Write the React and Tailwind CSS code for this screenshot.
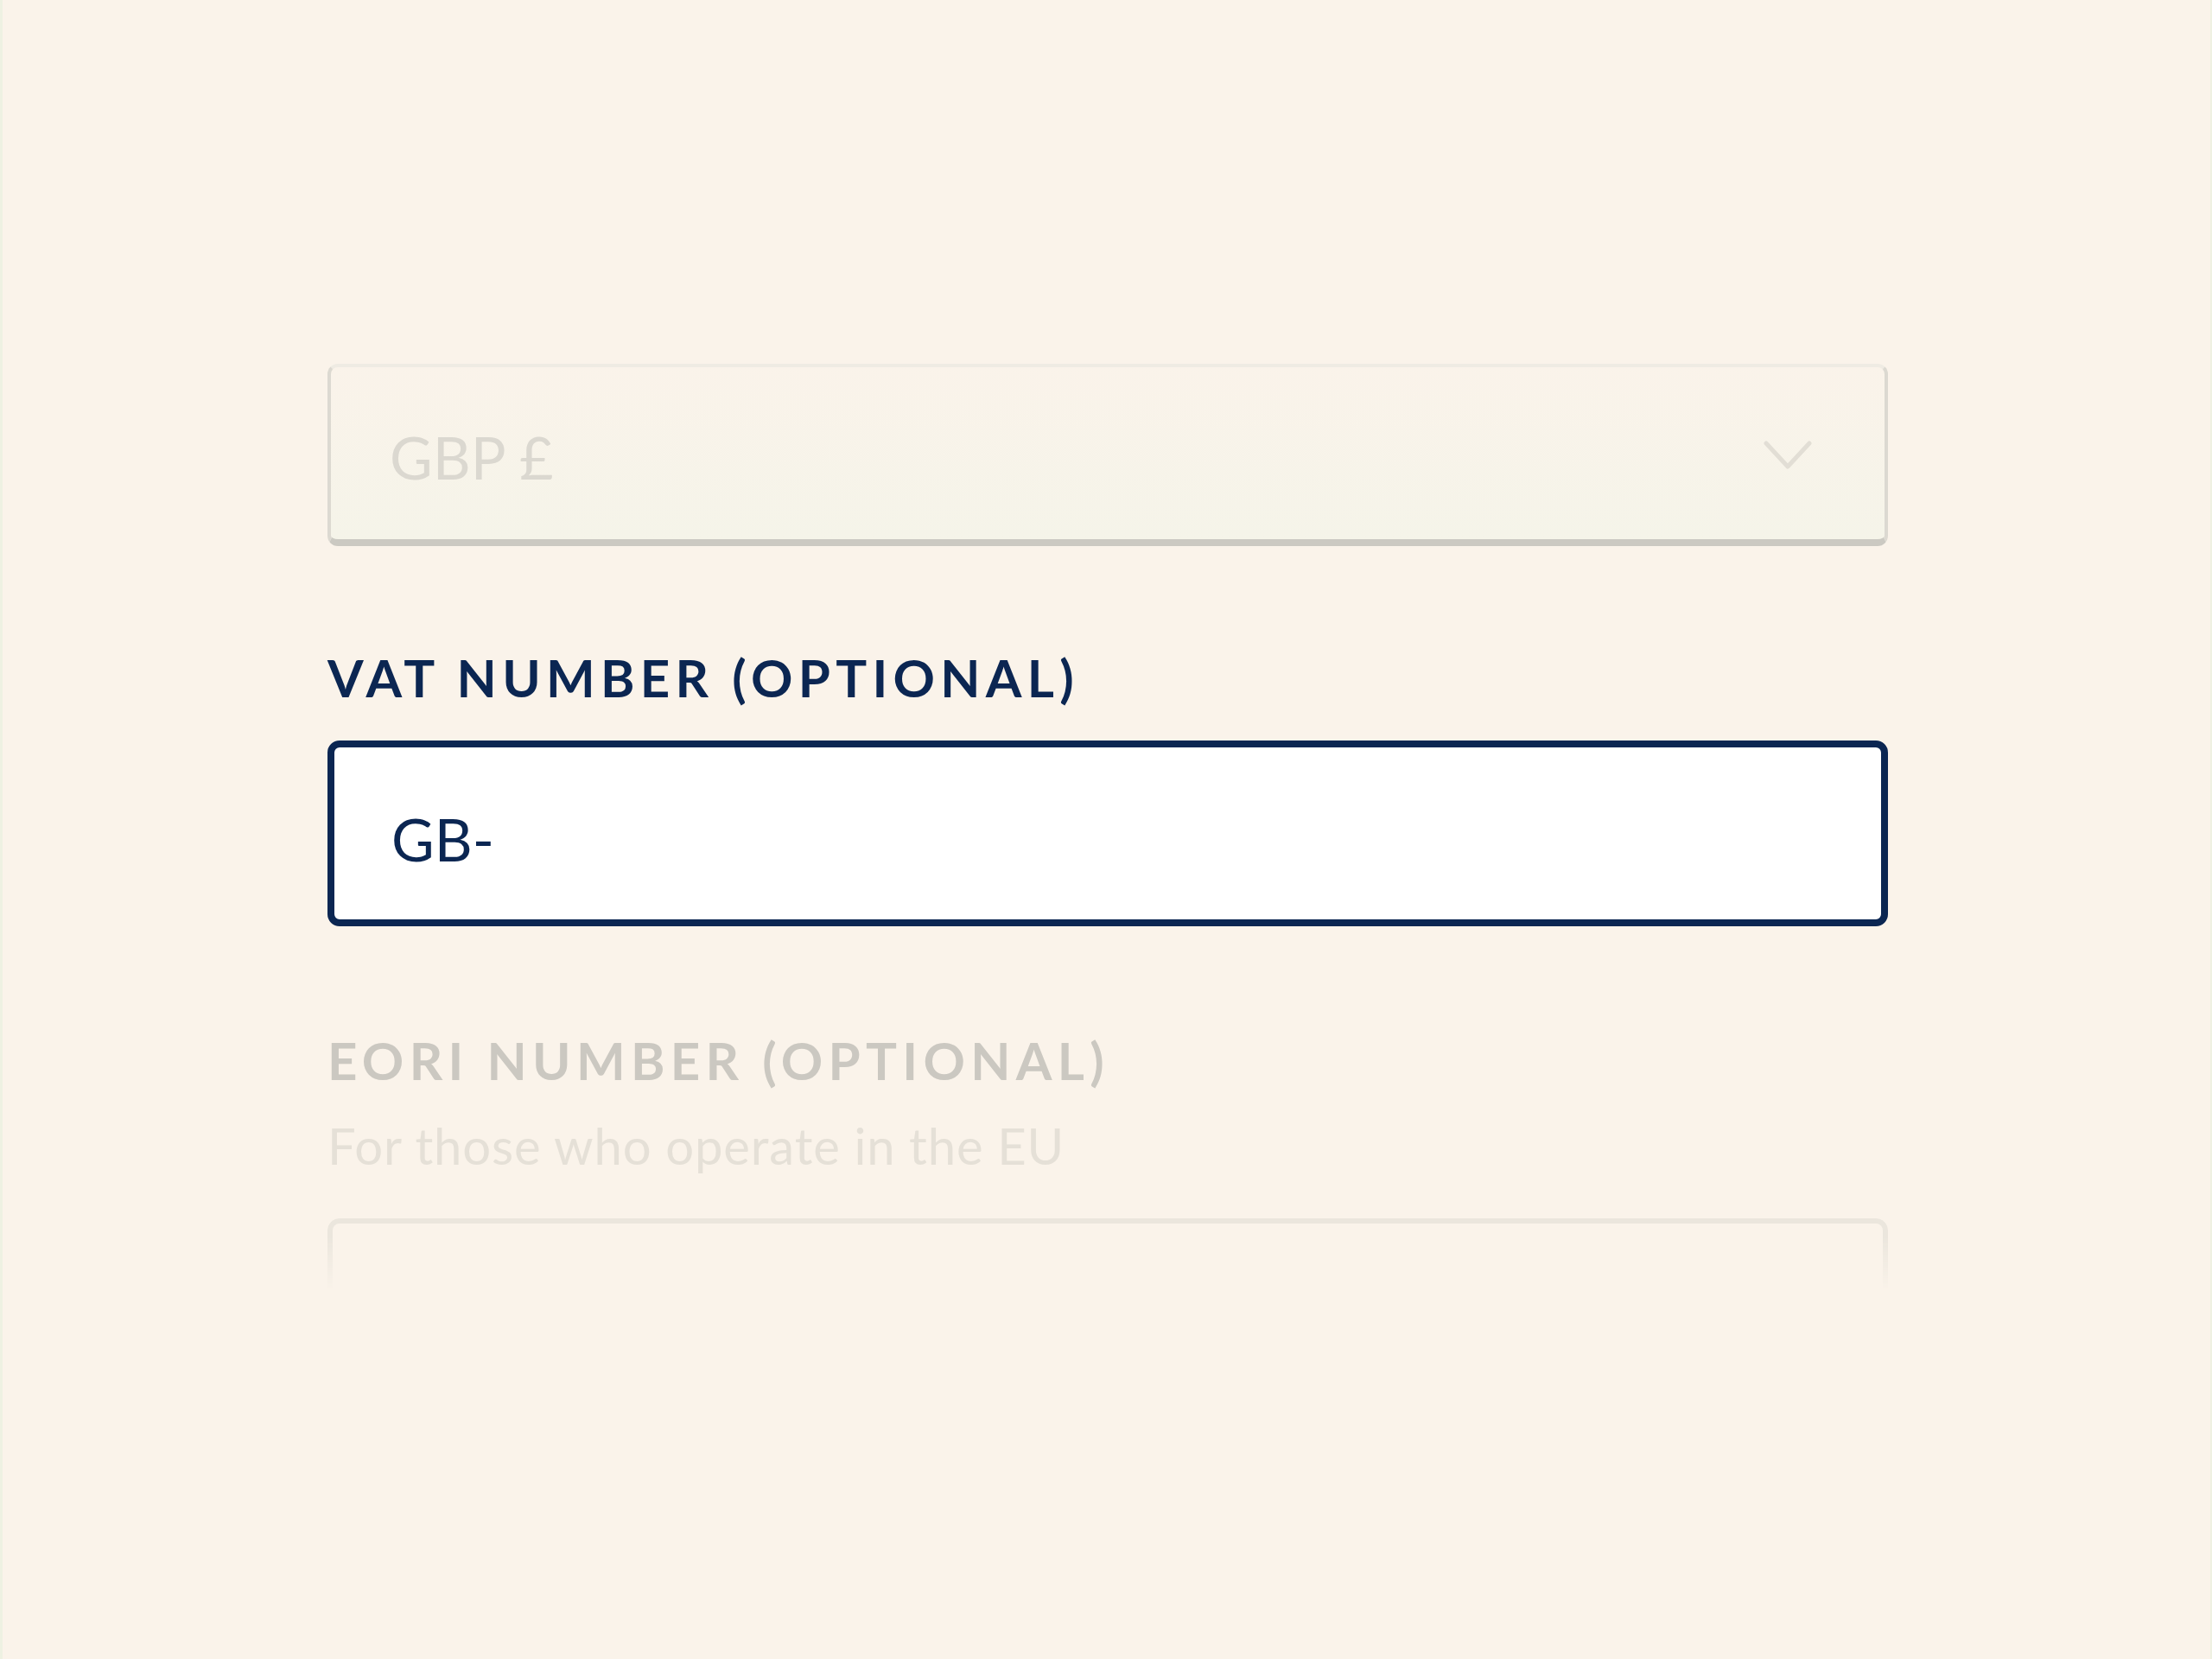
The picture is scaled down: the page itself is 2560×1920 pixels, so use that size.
import React from 'react';

const font = { fontFamily: 'Lato, "Open Sans", sans-serif' };

const Chevron = () => (
  <svg width="56" height="34" viewBox="0 0 56 34" fill="none" className="shrink-0">
    <polyline points="3,3 28,30 53,3" stroke="#e2ded5" strokeWidth="5" strokeLinecap="round" strokeLinejoin="round" />
  </svg>
);

export default function App() {
  return (
    <div
      className="min-h-screen w-full bg-[#faf3ea] border-l-[3px] border-r-[2px] border-[#eef1e2] overflow-hidden"
      style={font}
    >
      <div className="flex flex-col w-[1806px] ml-[376px] pt-[421px] pb-[400px]">
        {/* Currency select (faded) */}
        <div className="h-[211px] flex items-center justify-between rounded-[12px] border-[4px] border-t-[#efebe3] border-x-[#dcd9d1] border-b-[8px] border-b-[#cbc9c2] bg-gradient-to-b from-[#faf3ea] to-[#f5f4e9] pl-[68px] pr-[84px] pt-[9px]">
          <span className="text-[68px] leading-none text-[#dbd8d0] blur-[0.6px]">GBP £</span>
          <div className="blur-[0.6px] -mt-[4px]">
            <Chevron />
          </div>
        </div>

        {/* VAT number (focused) */}
        <label className="mt-[122px] text-[60px] leading-none font-bold tracking-[0.105em] text-[#0b2652] uppercase">
          VAT Number (Optional)
        </label>
        <div className="mt-[43px] h-[215px] flex items-center rounded-[14px] border-[8px] border-[#0b2652] bg-white pl-[66px] pt-[12px]">
          <span className="text-[68px] leading-none text-[#0b2652]">GB-</span>
        </div>

        {/* EORI number (faded) */}
        <div className="flex flex-col blur-[0.6px]">
          <span className="mt-[125px] text-[60px] leading-none font-bold tracking-[0.105em] text-[#cbc8c1] uppercase">
            EORI Number (Optional)
          </span>
          <span className="mt-[40px] text-[58px] leading-none tracking-[0.015em] text-[#e5e0d7]">
            For those who operate in the EU
          </span>
          <div className="mt-[55px] h-[110px] rounded-t-[14px] border-[6px] border-b-0 border-[#ebe6dd] [mask-image:linear-gradient(to_bottom,black_20%,transparent_75%)]" />
        </div>
      </div>
    </div>
  );
}
